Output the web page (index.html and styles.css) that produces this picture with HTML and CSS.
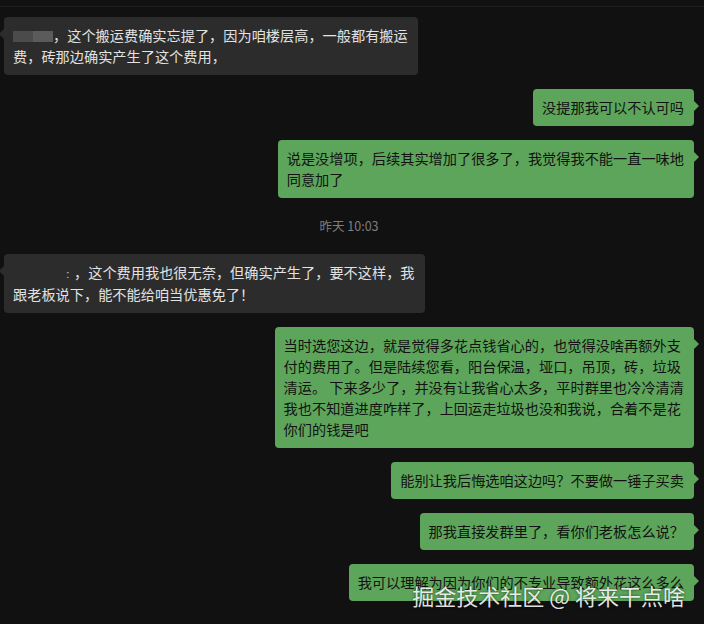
FILE: index.html
```html
<!DOCTYPE html>
<html lang="zh-CN">
<head>
<meta charset="utf-8">
<title>聊天记录</title>
<link rel="stylesheet" href="styles.css">
</head>
<body>
<div class="screen">
  <div class="topline"></div>
  <div class="chat">
    <div class="row left">
      <div class="bubble gray"><span class="blur a"></span><span class="blur b"></span>，这个搬运费确实忘提了，因为咱楼层高，一般都有搬运<br>费，砖那边确实产生了这个费用，</div>
    </div>
    <div class="row right">
      <div class="bubble green">没提那我可以不认可吗</div>
    </div>
    <div class="row right">
      <div class="bubble green">说是没增项，后续其实增加了很多了，我觉得我不能一直一味地<br>同意加了</div>
    </div>
    <div class="time">昨天 10:03</div>
    <div class="row left">
      <div class="bubble gray"><span class="hidden-name"></span><span class="mark">ː</span>，这个费用我也很无奈，但确实产生了，要不这样，我<br>跟老板说下，能不能给咱当优惠免了！</div>
    </div>
    <div class="row right">
      <div class="bubble green">当时选您这边，就是觉得多花点钱省心的，也觉得没啥再额外支<br>付的费用了。但是陆续您看，阳台保温，垭口，吊顶，砖，垃圾<br>清运。 下来多少了，并没有让我省心太多，平时群里也冷冷清清<br>我也不知道进度咋样了，上回运走垃圾也没和我说，合着不是花<br>你们的钱是吧</div>
    </div>
    <div class="row right">
      <div class="bubble green">能别让我后悔选咱这边吗？不要做一锤子买卖</div>
    </div>
    <div class="row right">
      <div class="bubble green">那我直接发群里了，看你们老板怎么说？</div>
    </div>
    <div class="row right">
      <div class="bubble green">我可以理解为因为你们的不专业导致额外花这么多么</div>
    </div>
  </div>
  <div class="watermark">掘金技术社区 @ 将来干点啥</div>
</div>
</body>
</html>
```
FILE: styles.css
```css
html, body {
  margin: 0;
  padding: 0;
  background: #111111;
}
.screen {
  position: relative;
  width: 704px;
  height: 624px;
  overflow: hidden;
  background: #111111;
  font-family: "Noto Sans CJK SC", "Noto Sans", sans-serif;
}
.topline {
  height: 1px;
  background: #1f1f1f;
  margin: 6px 0 10px;
}
.chat {
  display: flex;
  flex-direction: column;
  gap: 14px;
  padding: 0 10px 0 4px;
}
.row {
  display: flex;
}
.row.left {
  justify-content: flex-start;
}
.row.right {
  justify-content: flex-end;
}
.bubble {
  position: relative;
  font-size: 14.2px;
  line-height: 21px;
  padding: 8px 10px 8px 9px;
  border-radius: 4px;
  white-space: nowrap;
}
.bubble.gray {
  background: #2c2c2c;
  color: #e2e2e2;
}
.bubble.green {
  background: #5ca55a;
  color: #121212;
}
.bubble.gray::before {
  content: "";
  position: absolute;
  left: -5px;
  top: 12px;
  border-style: solid;
  border-width: 5px 5px 5px 0;
  border-color: transparent #2c2c2c transparent transparent;
}
.bubble.green::after {
  content: "";
  position: absolute;
  right: -5px;
  top: 12px;
  border-style: solid;
  border-width: 5px 0 5px 5px;
  border-color: transparent transparent transparent #5ca55a;
}
.blur {
  display: inline-block;
  width: 20px;
  height: 11px;
  vertical-align: -1px;
}
.blur.a {
  background: #4b4b4b;
}
.blur.b {
  background: #5b5b5b;
}
.hidden-name {
  display: inline-block;
  width: 53px;
}
.mark {
  display: inline-block;
  width: 8px;
  font-size: 11px;
  color: #bdbdbd;
}
.time {
  text-align: center;
  font-size: 12.5px;
  line-height: 16px;
  padding: 6px 0;
  color: #7e7e7e;
}
.watermark {
  position: absolute;
  right: 19px;
  bottom: 16px;
  font-size: 22px;
  line-height: 26px;
  color: rgba(255, 255, 255, 0.88);
  text-shadow: 0 0 3px rgba(0, 0, 0, 0.6);
}
```
